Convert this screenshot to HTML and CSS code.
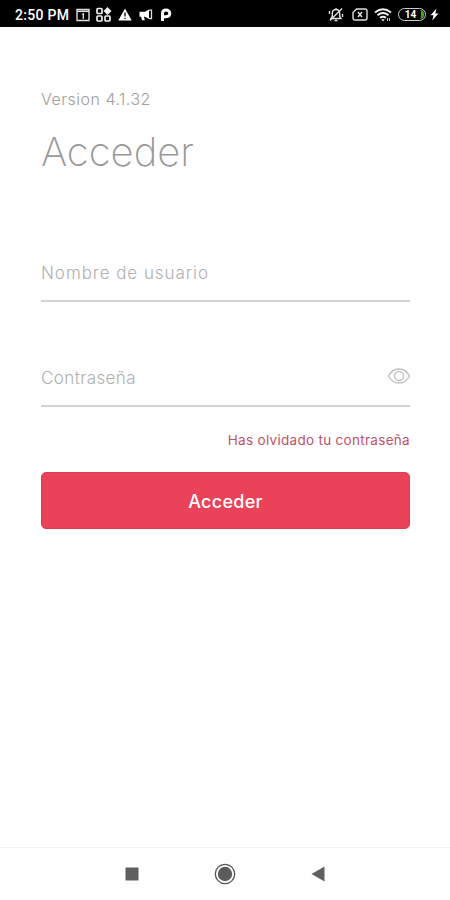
FILE: index.html
```html
<!DOCTYPE html>
<html lang="es">
<head>
  <meta charset="UTF-8" />
  <meta name="viewport" content="width=device-width, initial-scale=1.0"/>
  <title>Acceder</title>
  <link rel="stylesheet" href="styles.css">
</head>
<body>

<div class="status-bar">
  <div class="status-left">
    <span class="time">2:50 PM</span>
    <!-- calendar -->
    <svg width="14" height="14" viewBox="0 0 14 14"><path d="M1 1.5h12v11H1z" fill="none" stroke="#ddd" stroke-width="1.4"/><path d="M1 3.3h12" stroke="#ddd" stroke-width="1.6"/><path d="M6 6.5l1.3-.7V11" fill="none" stroke="#ddd" stroke-width="1.3"/></svg>
    <!-- apps -->
    <svg width="16" height="16" viewBox="0 0 16 16"><g fill="none" stroke="#eee" stroke-width="1.7"><rect x="1" y="1.5" width="5" height="5" rx="1"/><rect x="1" y="9" width="5" height="5" rx="1"/><rect x="9" y="9" width="5" height="5" rx="1"/></g><path d="M11.5 0l4 4-4 4-4-4z" fill="#eee"/></svg>
    <!-- warning -->
    <svg width="14" height="13" viewBox="0 0 14 13"><path d="M7 .5L13.7 12.5H.3z" fill="#fff"/><path d="M7 4.5v4M7 9.7v1.4" stroke="#000" stroke-width="1.3"/></svg>
    <!-- megaphone -->
    <svg class="icon-horn" width="14" height="12" viewBox="0 0 14 12"><path d="M.5 2.7H6v5H5l.8 3.5H3L2 7.7H.5z" fill="#fff"/><path d="M6 2.7L10 .5V10L6 7.7z" fill="#fff"/><path d="M10 1.2h2.5v8.3H10" fill="none" stroke="#ddd" stroke-width="1.3"/></svg>
    <!-- p badge -->
    <svg class="icon-p" width="12" height="14" viewBox="0 0 12 14"><path d="M2.5 13V5.2C2.5 3 4 2 6 2s3.8 1.2 3.8 3.3S8.2 8.700 6 8.700H4" fill="none" stroke="#fff" stroke-width="3"/></svg>
  </div>
  <div class="status-right">
    <!-- muted bell -->
    <svg width="16" height="15" viewBox="0 0 16 15"><g fill="none" stroke="#ddd" stroke-width="1.4"><path d="M3 11.5l1.3-2v-3C4.3 4 5.8 2.500 8 2.500s3.700 1.500 3.700 4v3l1.300 2zM6.500 13.500h3M8 1v1.500M1.500 4v3M14.500 7v3"/><path d="M14 1.500L2 13.500"/></g></svg>
    <!-- sim -->
    <svg width="16" height="13" viewBox="0 0 16 13"><path d="M4.500 1H13q2 0 2 2v7q0 2-2 2H3q-2 0-2-2V4.500z" fill="none" stroke="#ddd" stroke-width="1.4"/><path d="M6 4l4 5M10 4L6 9" stroke="#ddd" stroke-width="1.5"/></svg>
    <!-- wifi -->
    <svg width="18" height="14" viewBox="0 0 18 14"><g fill="none" stroke="#eee" stroke-width="1.9"><path d="M1 4.500q8-6.500 16 0M3.500 7.200q5.500-4.300 11 0M6 9.800q3-2.300 6 0"/></g><path d="M7.200 11.200h3.600L9 13.500z" fill="#eee"/><path d="M13.500 10v3M15.500 10v3" stroke="#ccc" stroke-width="1"/></svg>
    <span class="battery"><span class="battery-level">14</span></span>
    <svg width="9" height="13" viewBox="0 0 9 13"><path d="M6.500.5L.5 7.300h3L2.300 12.500 8.500 5.500H5.300z" fill="#fff"/></svg>
  </div>
</div>

<form class="login">
  <p class="version">Version 4.1.32</p>
  <h1>Acceder</h1>

  <div class="field user">
    <input type="text" placeholder="Nombre de usuario" aria-label="Nombre de usuario">
  </div>

  <div class="field password">
    <input type="password" placeholder="Contraseña" aria-label="Contraseña">
    <svg class="eye" width="24" height="18" viewBox="0 0 24 18"><g fill="none" stroke="#c0c0c0" stroke-width="1.3"><path d="M1.500 9C4 4 7.500 2 12 2S20 4 22.500 9c-2.500 5-6 7-10.500 7S4 14 1.500 9z"/><circle cx="12" cy="9" r="4.500"/></g></svg>
  </div>

  <a class="forgot" href="#">Has olvidado tu contraseña</a>
  <button type="button">Acceder</button>
</form>

<div class="nav-bar">
  <svg width="14" height="14" viewBox="0 0 14 14"><path d="M.5.5h13v13H.5z" fill="#606060"/></svg>
  <svg width="22" height="22" viewBox="0 0 22 22"><circle cx="11" cy="11" r="9.7" fill="none" stroke="#555" stroke-width="1.3"/><circle cx="11" cy="11" r="7.2" fill="#5c5c5c"/></svg>
  <svg width="14" height="16" viewBox="0 0 14 16"><path d="M13.500.5v15L.5 8z" fill="#606060"/></svg>
</div>

</body>
</html>
```

FILE: styles.css
```css
* {
  box-sizing: border-box;
}

body {
  font-family: Inter, "Open Sans", sans-serif;
  margin: 0;
  height: 100vh;
  display: flex;
  flex-direction: column;
  background: #fefefe;
}

svg {
  flex-shrink: 0;
}

.status-bar {
  height: 27px;
  padding: 2px 11px 0 15px;
  background: #000;
  color: #fff;
  display: flex;
  justify-content: space-between;
  align-items: center;
}

.status-left, .status-right {
  display: flex;
  align-items: center;
  gap: 6px;
}

.status-right svg:first-child {
  margin-right: 2px;
}

.time {
  font-family: Roboto, sans-serif;
  font-size: 14px;
  font-weight: 500;
  letter-spacing: 0.3px;
  width: 55px;
  white-space: nowrap;
}

.icon-horn, .icon-p {
  margin-left: 1px;
}

.battery {
  width: 28px;
  height: 13px;
  margin-right: -2px;
  padding: 1px;
  border: 1.5px solid #ccc;
  border-radius: 7px;
  display: flex;
}

.battery-level {
  flex: 1;
  border-right: 3px solid #3fa621;
  border-radius: 4px;
  font: bold 10px/10px Roboto, sans-serif;
  text-align: center;
}

.login {
  flex: 1;
  padding: 62px 40px 0 41px;
  display: flex;
  flex-direction: column;
}

.version {
  margin: 0;
  font-size: 16px;
  line-height: 20px;
  font-weight: 300;
  letter-spacing: 0.5px;
  color: #a0a0a0;
}

h1 {
  margin: 18px 0 0;
  font-size: 40px;
  line-height: 50px;
  font-weight: 200;
  color: #999;
}

.field {
  height: 45px;
  border-bottom: 2px solid #d2d2d2;
  display: flex;
}

.user {
  margin-top: 80px;
}

.password {
  margin-top: 60px;
}

.field input {
  flex: 1;
  min-width: 0;
  height: 32px;
  padding: 0;
  border: 0;
  outline: 0;
  background: none;
  font: 300 17px Inter, "Open Sans", sans-serif;
}

.user input {
  letter-spacing: 0.95px;
}

.password input {
  letter-spacing: 0.4px;
}

.field input::placeholder {
  color: #b0b0b0;
  opacity: 1;
}

.eye {
  margin: 5px -1px 0 0;
}

.forgot {
  align-self: flex-end;
  margin-top: 23px;
  font-size: 13.5px;
  line-height: 20px;
  letter-spacing: 0.3px;
  color: #bd5369;
  text-decoration: none;
}

button {
  height: 57px;
  margin-top: 22px;
  padding: 2px 0 0;
  border: 1px solid #dc3d54;
  border-radius: 5px;
  background: #ea4258;
  color: #fff;
  font: 500 18px Inter, "Open Sans", sans-serif;
  letter-spacing: 0.3px;
}

.nav-bar {
  height: 53px;
  padding: 0 125px;
  border-top: 1px solid #f3f3f3;
  display: flex;
  justify-content: space-between;
  align-items: center;
}
```
